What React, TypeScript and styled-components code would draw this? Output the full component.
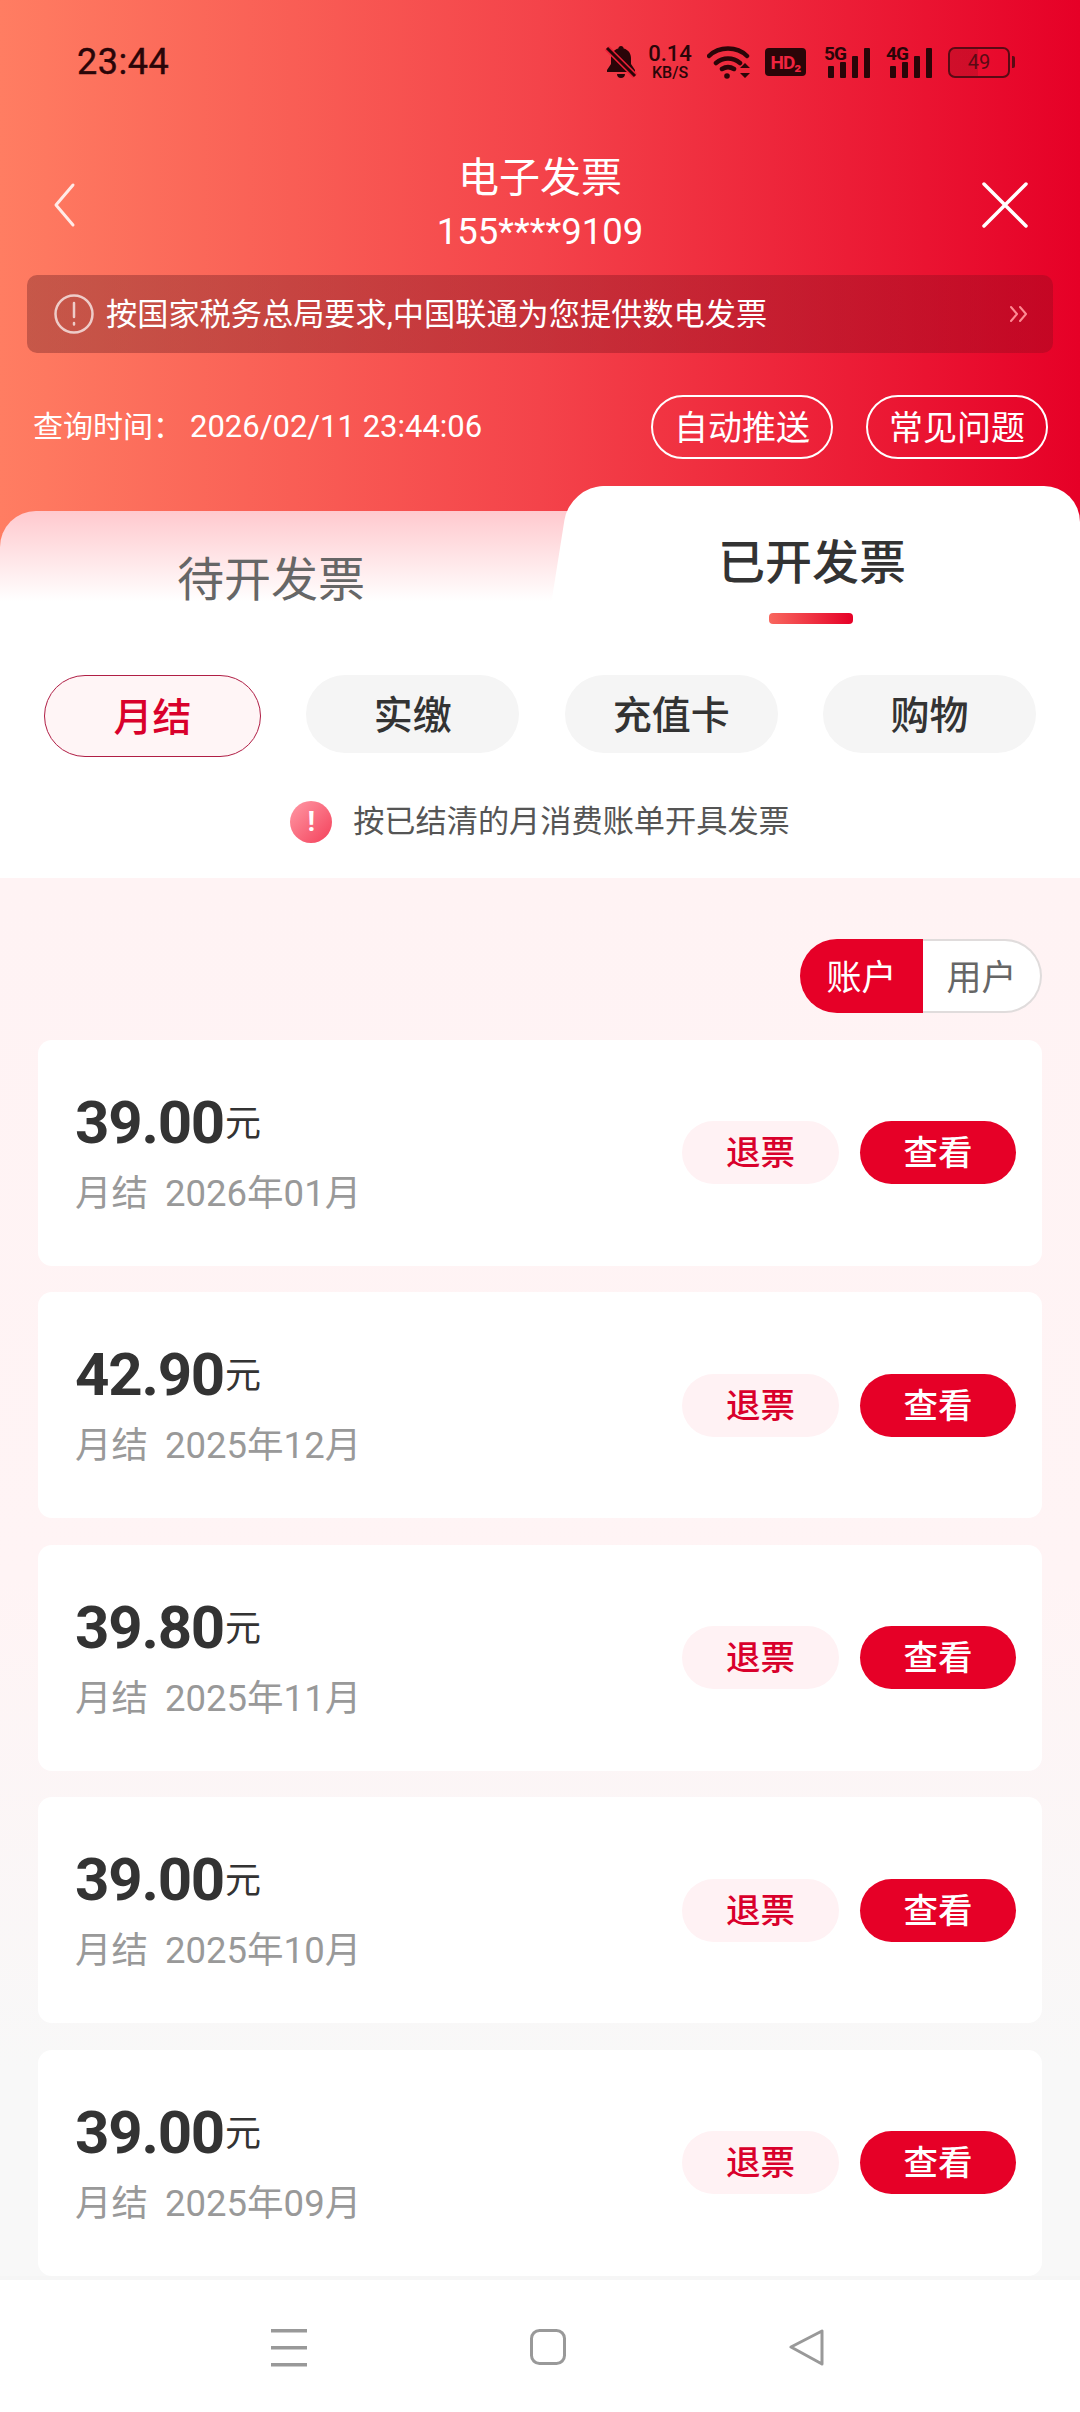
import styled, { createGlobalStyle } from 'styled-components';

const invoices = [
  { amount: '39.00', period: '2026年01月' },
  { amount: '42.90', period: '2025年12月' },
  { amount: '39.80', period: '2025年11月' },
  { amount: '39.00', period: '2025年10月' },
  { amount: '39.00', period: '2025年09月' },
];

const filters = ['月结', '实缴', '充值卡', '购物'];

const GlobalStyle = createGlobalStyle`
  html, body {
    margin: 0;
    padding: 0;
    background: #fff;
  }
  * {
    box-sizing: border-box;
  }
`;

const Page = styled.div`
  display: flex;
  flex-direction: column;
  width: 1080px;
  height: 2412px;
  overflow: hidden;
  background: #fff;
  font-family: Roboto, "Noto Sans CJK SC", sans-serif;
`;

const Hero = styled.div`
  background: linear-gradient(90deg, #ff7d62 0%, #f4434a 50%, #e60027 100%) no-repeat;
  background-size: 100% 560px;
`;

const StatusBar = styled.div`
  display: flex;
  align-items: center;
  justify-content: space-between;
  height: 124px;
  padding: 0 70px 0 77px;
  color: #2a0508;
`;

const Clock = styled.span`
  font-size: 36px;
  font-weight: 400;
  letter-spacing: 0.5px;
  -webkit-text-stroke: 0.4px #2a0508;
`;

const StatusIcons = styled.div`
  display: flex;
  align-items: center;
`;

const Speed = styled.div`
  display: flex;
  flex-direction: column;
  align-items: center;
  width: 46px;
  margin: 0 14px 0 10px;
  font-weight: 500;
  line-height: 1;
`;

const SpeedValue = styled.span`
  font-size: 22px;
`;

const SpeedUnit = styled.span`
  font-size: 16px;
`;

const HdBadge = styled.span`
  display: flex;
  align-items: center;
  justify-content: center;
  width: 41px;
  height: 28px;
  margin: 0 18px 0 12px;
  border-radius: 4px;
  background: #2a0508;
  color: #f0243f;
  font-size: 19px;
  font-weight: 700;
  letter-spacing: -1px;
`;

const Signal = styled.div`
  position: relative;
  width: 47px;
  height: 32px;
  margin-right: 15px;
`;

const SignalLabel = styled.span`
  position: absolute;
  top: -2px;
  left: 0;
  font-size: 19px;
  font-weight: 700;
  letter-spacing: -1px;
  line-height: 1;
`;

const Battery = styled.div`
  position: relative;
  display: flex;
  align-items: center;
  justify-content: center;
  width: 62px;
  height: 31px;
  border: 2.5px solid #5a0a14;
  border-radius: 7px;
  font-size: 20px;
  color: #5a0a14;
  background: linear-gradient(90deg, rgba(90, 10, 20, 0.18) 49%, transparent 49%);

  &::after {
    content: '';
    position: absolute;
    top: 7px;
    right: -7px;
    width: 3px;
    height: 12px;
    border-radius: 0 2px 2px 0;
    background: #5a0a14;
  }
`;

const NavRow = styled.div`
  display: flex;
  align-items: center;
  justify-content: space-between;
  height: 135px;
  padding: 27px 52px 0 53px;
`;

const TitleBlock = styled.div`
  display: flex;
  flex-direction: column;
  align-items: center;
  margin-left: 21px;
  color: #fff;
`;

const Title = styled.div`
  font-size: 41px;
  line-height: 54px;
`;

const Subtitle = styled.div`
  font-size: 36.5px;
  line-height: 54px;
`;

const Notice = styled.div`
  display: flex;
  align-items: center;
  height: 78px;
  margin: 16px 27px 0;
  padding: 0 24px 0 27px;
  border-radius: 10px;
  background: linear-gradient(90deg, rgba(120, 40, 40, 0.42), rgba(150, 10, 30, 0.42));
  color: #fff;
  font-size: 31.2px;
`;

const NoticeText = styled.span`
  flex: 1;
  margin-left: 12px;
  padding-bottom: 5px;
`;

const MetaRow = styled.div`
  display: flex;
  align-items: center;
  height: 64px;
  margin-top: 42px;
  padding: 0 32px 0 33px;
  color: #fff;
`;

const QueryTime = styled.span`
  flex: 1;
  font-size: 30px;
  padding-bottom: 6px;
`;

const QueryValue = styled.span`
  margin-left: 7px;
  font-size: 31px;
`;

const OutlineButton = styled.span`
  display: flex;
  align-items: center;
  justify-content: center;
  width: 182px;
  height: 64px;
  margin-left: 33px;
  padding-bottom: 3px;
  border: 2px solid #fff;
  border-radius: 32px;
  font-size: 34px;
`;

const Tabs = styled.div`
  display: flex;
  margin-top: 27px;
`;

const PendingTab = styled.div`
  flex: 0 0 600px;
  height: 139px;
  margin-top: 25px;
  margin-right: -30px;
  padding: 39px 0 0 177px;
  border-radius: 36px 0 0 0;
  background: linear-gradient(180deg, #ffc9ce 0%, #ffe6e8 35%, #fff 65%);
  color: #666;
  font-size: 47px;
  line-height: 60px;
`;

const IssuedTab = styled.div`
  position: relative;
  flex: 1;
  display: flex;
  flex-direction: column;
  height: 164px;
  padding: 47px 0 0 148px;
  border-radius: 36px 36px 0 0;
  background: #fff;

  &::before {
    content: '';
    position: absolute;
    top: 0;
    bottom: 40px;
    left: -10px;
    width: 90px;
    border-radius: 34px 0 0 0;
    background: #fff;
    transform: skewX(-9deg);
  }
`;

const IssuedLabel = styled.span`
  position: relative;
  color: #333;
  font-size: 47px;
  font-weight: 500;
  line-height: 60px;
`;

const TabMark = styled.span`
  position: relative;
  width: 84px;
  height: 11px;
  margin: 20px 0 0 51px;
  border-radius: 4px;
  background: linear-gradient(90deg, #f8675e, #e60027);
`;

const FilterRow = styled.div`
  display: flex;
  justify-content: space-between;
  align-items: flex-start;
  margin-top: 25px;
  padding: 0 44px;
`;

const FilterChip = styled.span<{ $active?: boolean }>`
  display: flex;
  align-items: center;
  justify-content: center;
  width: ${(p) => (p.$active ? '217px' : '213px')};
  height: ${(p) => (p.$active ? '82px' : '78px')};
  padding-bottom: 5px;
  border-radius: 41px;
  border: ${(p) => (p.$active ? '1.5px solid #b01e45' : 'none')};
  background: ${(p) => (p.$active ? '#fff5f6' : '#f5f5f5')};
  color: ${(p) => (p.$active ? '#d9002b' : '#333')};
  font-size: 39px;
  font-weight: 500;
`;

const InfoRow = styled.div`
  display: flex;
  align-items: center;
  justify-content: center;
  padding: 44px 0 35px;
  color: #555;
  font-size: 31.2px;
  line-height: 42px;
`;

const InfoDot = styled.span`
  display: flex;
  align-items: center;
  justify-content: center;
  width: 42px;
  height: 42px;
  margin-right: 21px;
  border-radius: 50%;
  background: linear-gradient(135deg, #ff9aa6, #f4405a);
  color: #fff;
  font-size: 28px;
  font-weight: 700;
`;

const ListArea = styled.div`
  flex: 1;
  display: flex;
  flex-direction: column;
  gap: 26.4px;
  padding: 0 38px;
  background: linear-gradient(180deg, #fff3f4 0%, #fff4f5 50%, #f8f8f8 85%);
`;

const Toggle = styled.div`
  display: flex;
  align-self: flex-end;
  width: 242px;
  height: 74px;
  margin-top: 61px;
  margin-bottom: 0.6px;
  font-size: 35px;
`;

const ToggleOption = styled.span<{ $active?: boolean }>`
  display: flex;
  align-items: center;
  justify-content: center;
  width: ${(p) => (p.$active ? '123px' : '119px')};
  padding-bottom: 3px;
  border: ${(p) => (p.$active ? 'none' : '2px solid #e0dcdc')};
  border-left: none;
  border-radius: ${(p) => (p.$active ? '37px 0 0 37px' : '0 37px 37px 0')};
  background: ${(p) => (p.$active ? '#e60027' : '#fff')};
  color: ${(p) => (p.$active ? '#fff' : '#666')};
`;

const Card = styled.div`
  display: flex;
  align-items: center;
  justify-content: space-between;
  height: 226px;
  padding: 0 26px 0 37px;
  border-radius: 14px;
  background: #fff;
`;

const CardInfo = styled.div`
  padding-bottom: 1px;
`;

const Amount = styled.div`
  display: flex;
  align-items: center;
  color: #333;
  font-size: 60px;
  font-weight: 700;
  letter-spacing: -1.2px;
  line-height: 70px;
`;

const Unit = styled.span`
  margin-left: 1px;
  padding-top: 2px;
  font-size: 36px;
  font-weight: 400;
  letter-spacing: 0;
  line-height: 1;
`;

const Period = styled.div`
  margin-top: 13px;
  color: #999;
  font-size: 36.5px;
  line-height: 46px;
  word-spacing: 8px;
`;

const Actions = styled.div`
  display: flex;
  gap: 21px;
`;

const ActionButton = styled.span<{ $primary?: boolean }>`
  display: flex;
  align-items: center;
  justify-content: center;
  width: ${(p) => (p.$primary ? '156px' : '157px')};
  height: 63px;
  padding-bottom: 5px;
  border-radius: 32px;
  background: ${(p) => (p.$primary ? '#e60027' : '#fff2f4')};
  color: ${(p) => (p.$primary ? '#fff' : '#d9002b')};
  font-size: 34.5px;
  font-weight: 500;
`;

const BottomNav = styled.div`
  display: flex;
  align-items: flex-start;
  justify-content: center;
  gap: 223px;
  height: 137px;
  padding: 49px 0 0 16px;
  border-top: 4px solid #f6f6f6;
  background: #fff;
`;

const BackIcon = () => (
  <svg width="24" height="46" viewBox="0 0 24 46" fill="none" stroke="#fff" strokeWidth="3" strokeLinecap="round" strokeLinejoin="round">
    <path d="M20 3 3 23l17 20" opacity="0.85" />
  </svg>
);

const CloseIcon = () => (
  <svg width="46" height="46" viewBox="0 0 46 46" fill="none" stroke="#fff" strokeWidth="3.5" strokeLinecap="round">
    <path d="M2 2l42 42M44 2 2 44" />
  </svg>
);

const AlertIcon = () => (
  <svg width="40" height="40" viewBox="0 0 40 40" fill="none" stroke="#fff" strokeOpacity="0.7" strokeWidth="2.5" strokeLinecap="round">
    <circle cx="20" cy="20" r="18.5" />
    <path d="M20 9v14M20 29v1.5" />
  </svg>
);

const MoreIcon = () => (
  <svg width="20" height="18" viewBox="0 0 20 18" fill="none" stroke="#ff8a93" strokeWidth="2" strokeLinecap="round" strokeLinejoin="round">
    <path d="M2 2l6 7-6 7M11 2l6 7-6 7" />
  </svg>
);

const MuteIcon = () => (
  <svg width="32" height="34" viewBox="0 0 32 34" fill="#2a0508">
    <path d="M16 1c1.600 0 2.500 1 2.700 2.400C23.500 4.700 26 8.500 26 13v6l4 6v2H2v-2l4-6v-6c0-4.500 2.500-8.300 7.300-9.600C13.500 2 14.400 1 16 1zM12 29h8c0 2.500-1.600 4-4 4s-4-1.500-4-4z" />
    <path d="M2 3l28 28" stroke="#ee2038" strokeWidth="6" />
    <path d="M2 3l28 28" stroke="#2a0508" strokeWidth="3" />
  </svg>
);

const WifiIcon = () => (
  <svg width="46" height="34" viewBox="0 0 46 34" fill="none" stroke="#2a0508" strokeWidth="4.5" strokeLinecap="round">
    <path d="M2 11C12 1 30 1 40 11M9 18c7-6 17-6 24 0M15 24c4-2.500 8-2.500 12 0" />
    <circle cx="20" cy="31" r="2.800" fill="#2a0508" stroke="none" />
    <path d="M38 18l-5 5h10zM38 33l-5-5h10z" fill="#2a0508" stroke="none" />
  </svg>
);

const SignalBars = () => (
  <svg width="47" height="32" viewBox="0 0 47 32">
    <g fill="#2a0508">
      <rect x="4" y="20" width="6" height="12" rx="1" />
      <rect x="16" y="16" width="6" height="16" rx="1" />
      <rect x="28" y="10" width="6" height="22" rx="1" />
      <rect x="40" y="2" width="6" height="30" rx="1" />
    </g>
  </svg>
);

const MenuIcon = () => (
  <svg width="36" height="39" viewBox="0 0 36 39" fill="#999">
    <rect x="0" y="0" width="36" height="3.500" />
    <rect x="0" y="17" width="36" height="3.500" />
    <rect x="0" y="34" width="36" height="3.500" />
  </svg>
);

const HomeIcon = () => (
  <svg width="36" height="39" viewBox="0 0 36 39" fill="none" stroke="#999" strokeWidth="3">
    <rect x="1.500" y="1.500" width="33" height="33" rx="8" />
  </svg>
);

const TriangleIcon = () => (
  <svg width="36" height="39" viewBox="0 0 36 39" fill="none" stroke="#999" strokeWidth="3" strokeLinejoin="round">
    <path d="M33 2v33L2 18z" />
  </svg>
);

export default function App() {
  return (
    <Page>
      <GlobalStyle />
      <Hero>
        <StatusBar>
          <Clock>23:44</Clock>
          <StatusIcons>
            <MuteIcon />
            <Speed>
              <SpeedValue>0.14</SpeedValue>
              <SpeedUnit>KB/S</SpeedUnit>
            </Speed>
            <WifiIcon />
            <HdBadge>HD₂</HdBadge>
            <Signal>
              <SignalLabel>5G</SignalLabel>
              <SignalBars />
            </Signal>
            <Signal>
              <SignalLabel>4G</SignalLabel>
              <SignalBars />
            </Signal>
            <Battery>49</Battery>
          </StatusIcons>
        </StatusBar>
        <NavRow>
          <BackIcon />
          <TitleBlock>
            <Title>电子发票</Title>
            <Subtitle>155****9109</Subtitle>
          </TitleBlock>
          <CloseIcon />
        </NavRow>
        <Notice>
          <AlertIcon />
          <NoticeText>按国家税务总局要求,中国联通为您提供数电发票</NoticeText>
          <MoreIcon />
        </Notice>
        <MetaRow>
          <QueryTime>
            查询时间：<QueryValue>2026/02/11 23:44:06</QueryValue>
          </QueryTime>
          <OutlineButton>自动推送</OutlineButton>
          <OutlineButton>常见问题</OutlineButton>
        </MetaRow>
        <Tabs>
          <PendingTab>待开发票</PendingTab>
          <IssuedTab>
            <IssuedLabel>已开发票</IssuedLabel>
            <TabMark />
          </IssuedTab>
        </Tabs>
      </Hero>
      <FilterRow>
        {filters.map((name, i) => (
          <FilterChip key={name} $active={i === 0}>{name}</FilterChip>
        ))}
      </FilterRow>
      <InfoRow>
        <InfoDot>!</InfoDot>
        按已结清的月消费账单开具发票
      </InfoRow>
      <ListArea>
        <Toggle>
          <ToggleOption $active>账户</ToggleOption>
          <ToggleOption>用户</ToggleOption>
        </Toggle>
        {invoices.map((item) => (
          <Card key={item.period}>
            <CardInfo>
              <Amount>
                {item.amount}
                <Unit>元</Unit>
              </Amount>
              <Period>月结 {item.period}</Period>
            </CardInfo>
            <Actions>
              <ActionButton>退票</ActionButton>
              <ActionButton $primary>查看</ActionButton>
            </Actions>
          </Card>
        ))}
      </ListArea>
      <BottomNav>
        <MenuIcon />
        <HomeIcon />
        <TriangleIcon />
      </BottomNav>
    </Page>
  );
}
